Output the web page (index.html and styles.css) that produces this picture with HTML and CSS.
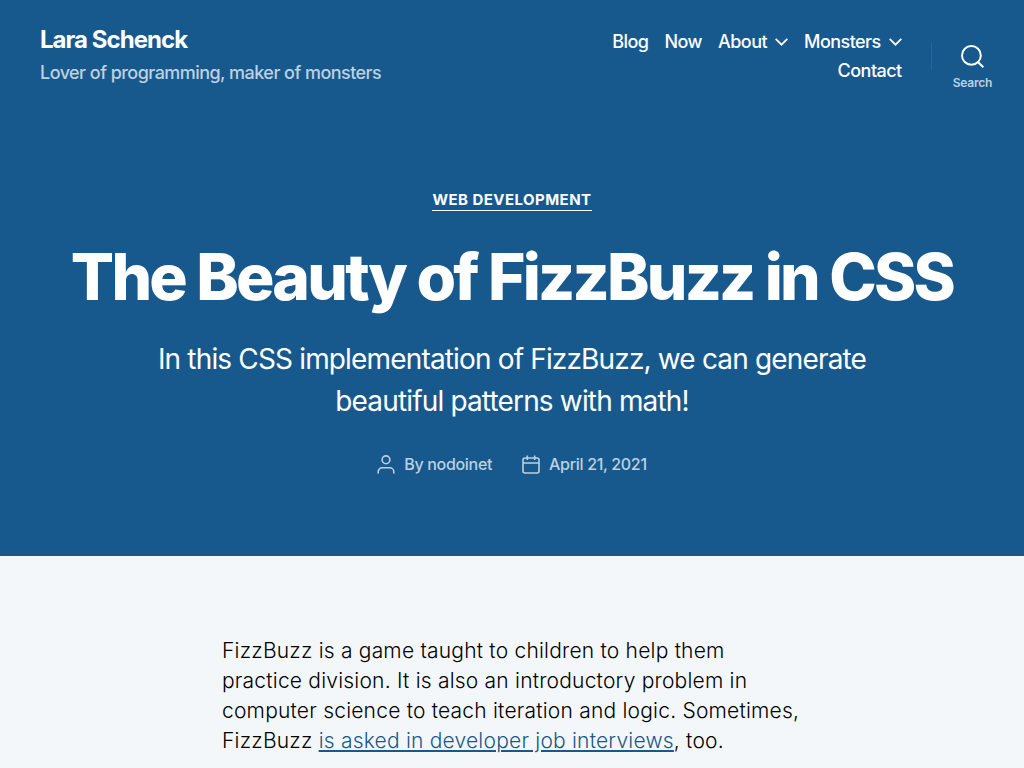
FILE: index.html
```html
<!DOCTYPE html>
<html lang="en">
<head>
<meta charset="utf-8">
<meta name="viewport" content="width=device-width, initial-scale=1">
<title>The Beauty of FizzBuzz in CSS – Lara Schenck</title>
<link rel="stylesheet" href="styles.css">
</head>
<body>
<header class="site-header">
  <div class="branding">
    <a class="site-title" href="#">Lara Schenck</a>
    <p class="site-description">Lover of programming, maker of monsters</p>
  </div>
  <nav class="site-nav" aria-label="Primary">
    <ul class="menu">
      <li><a href="#">Blog</a></li>
      <li><a href="#">Now</a></li>
      <li class="has-children"><a href="#">About</a><svg class="chevron" viewBox="0 0 13 8" aria-hidden="true"><path d="M.7.9 6.5 6.7 12.3.9"/></svg></li>
      <li class="has-children"><a href="#">Monsters</a><svg class="chevron" viewBox="0 0 13 8" aria-hidden="true"><path d="M.7.9 6.5 6.7 12.3.9"/></svg></li>
      <li><a href="#">Contact</a></li>
    </ul>
  </nav>
  <div class="search-area">
    <button class="search-toggle" type="button">
      <svg class="search-icon" viewBox="0 0 23 23" aria-hidden="true"><circle cx="10.4" cy="10.4" r="9.4"/><path d="M17.2 17.2 22.3 22.3"/></svg>
      <span>Search</span>
    </button>
  </div>
</header>
<main>
  <article>
    <header class="entry-header">
      <a class="category" href="#">Web Development</a>
      <h1 class="entry-title">The Beauty of FizzBuzz in CSS</h1>
      <p class="intro">In this CSS implementation of FizzBuzz, we can generate beautiful patterns with math!</p>
      <ul class="meta">
        <li><svg class="meta-icon" viewBox="0 0 18 19" aria-hidden="true"><circle cx="9" cy="4.8" r="3.9"/><path d="M1.2 18.5v-1.7a4 4 0 0 1 4-4h7.6a4 4 0 0 1 4 4v1.7"/></svg><span>By <a href="#">nodoinet</a></span></li>
        <li><svg class="meta-icon" viewBox="0 0 18 19" aria-hidden="true"><rect x="1" y="3" width="16" height="15" rx="2"/><path d="M5.3.5V5M12.7.5V5M1 8h16"/></svg><a href="#">April 21, 2021</a></li>
      </ul>
    </header>
    <div class="entry-content">
      <p>FizzBuzz is a game taught to children to help them practice division. It is also an introductory problem in computer science to teach iteration and logic. Sometimes, FizzBuzz <a href="#">is asked in developer job interviews</a>, too.</p>
    </div>
  </article>
</main>
</body>
</html>
```

FILE: styles.css
```css
* {
  box-sizing: border-box;
}

body {
  margin: 0;
  background: #f3f7fa;
  color: #000;
  font-family: Inter, "Liberation Sans", sans-serif;
}

a {
  color: inherit;
  text-decoration: none;
}

p,
h1,
ul {
  margin: 0;
  padding: 0;
}

ul {
  list-style: none;
}

.site-header {
  display: flex;
  align-items: center;
  padding: 23px 0 23px 40px;
  background: #18598d;
  color: #fff;
}

.branding {
  flex: 1;
  padding-bottom: 4px;
}

.site-title {
  display: block;
  font-size: 24px;
  font-weight: 700;
  line-height: 30px;
  letter-spacing: -0.04em;
}

.site-description {
  margin-top: 7px;
  font-size: 18px;
  font-weight: 500;
  line-height: 22px;
  letter-spacing: -0.03em;
  color: #bcd1e1;
}

.site-nav {
  width: 320px;
}

.menu {
  display: flex;
  flex-wrap: wrap;
  justify-content: flex-end;
  gap: 7px 16px;
  font-size: 18px;
  font-weight: 500;
  line-height: 22px;
  letter-spacing: -0.03em;
}

.has-children {
  display: flex;
  align-items: center;
  gap: 8px;
}

.chevron {
  width: 13px;
  height: 8px;
  fill: none;
  stroke: currentColor;
  stroke-width: 1.7;
}

.search-area {
  display: flex;
  align-items: center;
  margin-left: 29px;
}

.search-area::before {
  content: "";
  width: 1px;
  height: 27px;
  background: #1c68a5;
}

.search-toggle {
  display: flex;
  flex-direction: column;
  align-items: center;
  gap: 8px;
  padding: 22px 32px 0 21px;
  border: 0;
  background: none;
  color: #fff;
  font: 600 12px/14px Inter, sans-serif;
  letter-spacing: -0.02em;
}

.search-toggle span {
  color: #bcd1e1;
}

.search-icon {
  width: 23px;
  height: 23px;
  fill: none;
  stroke: currentColor;
  stroke-width: 2;
}

.entry-header {
  display: flex;
  flex-direction: column;
  align-items: center;
  padding: 77px 40px 82px;
  background: #18598d;
  color: #fff;
  text-align: center;
}

.category {
  border-bottom: 1px solid;
  font-size: 15px;
  font-weight: 700;
  line-height: 20px;
  letter-spacing: 0.03em;
  text-transform: uppercase;
}

.entry-title {
  margin-top: 30px;
  font-size: 64px;
  font-weight: 800;
  line-height: 72px;
  letter-spacing: -0.043em;
}

.intro {
  max-width: 720px;
  margin-top: 25px;
  font-size: 28px;
  line-height: 42px;
  letter-spacing: -0.03em;
}

.meta {
  display: flex;
  gap: 30px;
  margin-top: 32px;
  font-size: 16px;
  font-weight: 500;
  line-height: 20px;
  letter-spacing: -0.02em;
  color: #bcd1e1;
}

.meta li {
  display: flex;
  align-items: center;
  gap: 9px;
}

.meta-icon {
  width: 18px;
  height: 19px;
  fill: none;
  stroke: currentColor;
  stroke-width: 1.6;
}

.entry-content {
  max-width: 580px;
  margin: 0 auto;
  padding-top: 80px;
  font-size: 21px;
  font-weight: 300;
  line-height: 30px;
  letter-spacing: 0.01em;
}

.entry-content a {
  color: #18598d;
  text-decoration: underline;
}
```
